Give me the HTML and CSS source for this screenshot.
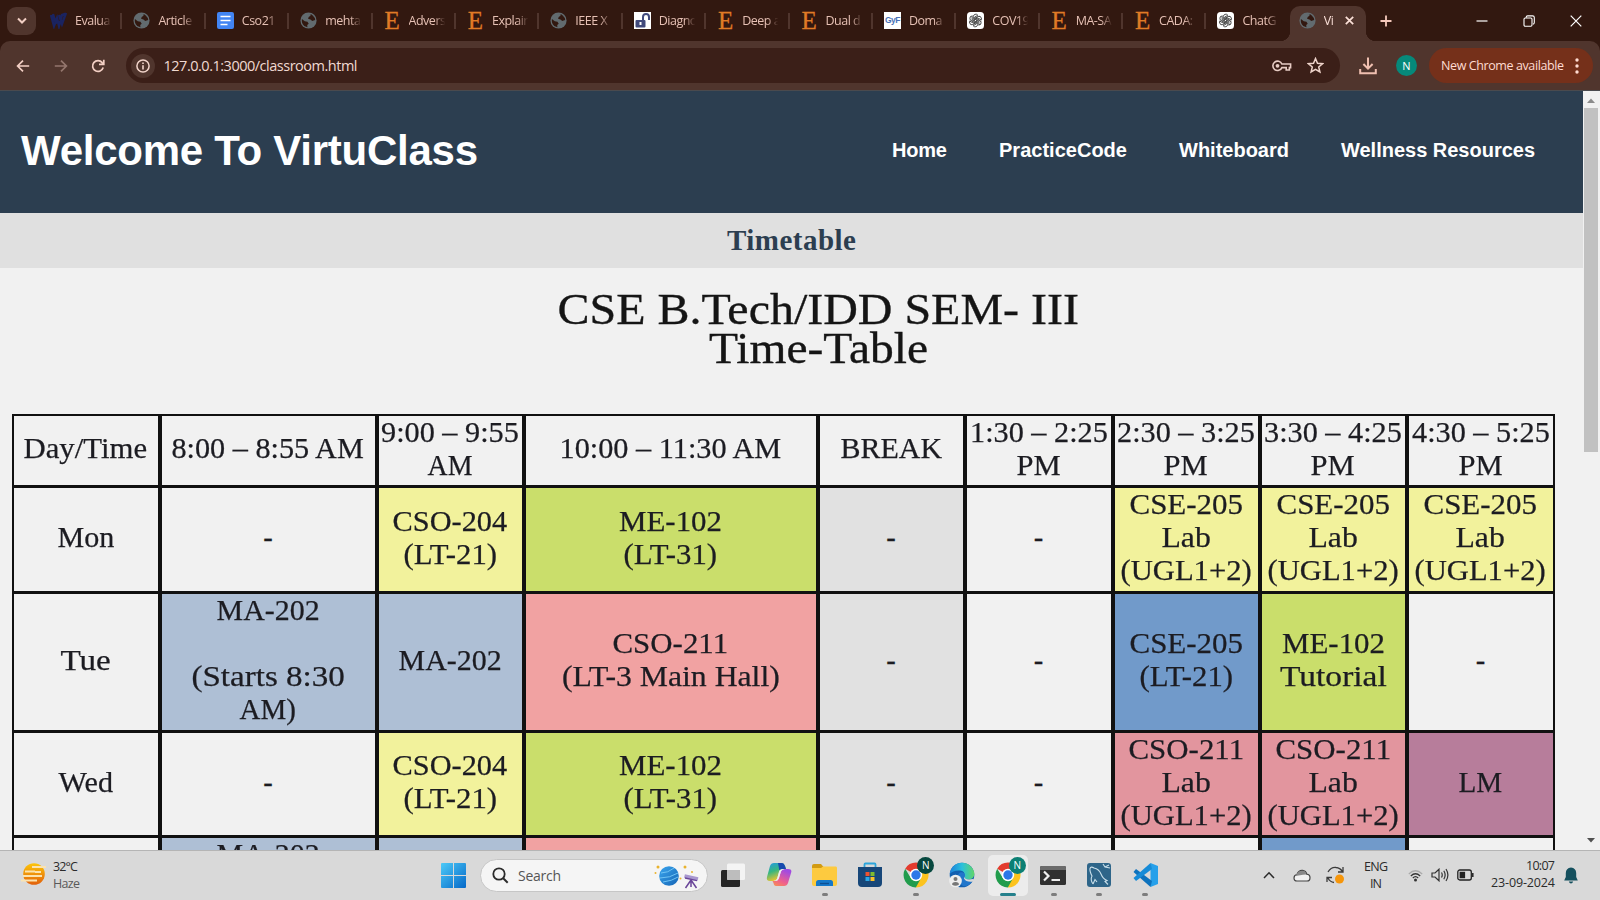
FILE: index.html
```html
<!DOCTYPE html>
<html lang="en">
<head>
<meta charset="utf-8">
<title>VirtuClass</title>
<link rel="stylesheet" href="styles.css">
</head>
<body>
<svg class="defs" width="0" height="0">
  <symbol id="globe" viewBox="0 0 16 16"><circle cx="8" cy="8" r="7.6" fill="#626b6f"/><path d="M1.800 6.500 4.500 8.800 7 9.200 8.200 11 6.800 12.200 7 14.300 4 13.200Q1.200 10.500 1.800 6.500ZM7.500 1.800 10 2 9.800 3.600 8.200 4.600 7.600 6.400 9.800 7 11.500 8.400 14.300 7.600Q14.200 5 12 3.200L10.500 2Z" fill="#321810"/></symbol>
  <symbol id="gpt" viewBox="0 0 17 17"><rect width="17" height="17" rx="3.500" fill="#fff"/><g fill="none" stroke="#3c3c3c" stroke-width=".9"><path id="petal" d="M6.300 7.800V4.600A2.500 2.500 0 0 1 10.800 3.200L7.400 5.300V8.900"/><use href="#petal" transform="rotate(60 8.500 8.500)"/><use href="#petal" transform="rotate(120 8.500 8.500)"/><use href="#petal" transform="rotate(180 8.500 8.500)"/><use href="#petal" transform="rotate(240 8.500 8.500)"/><use href="#petal" transform="rotate(300 8.500 8.500)"/></g></symbol>
  <symbol id="chrome" viewBox="0 0 26 26"><path d="M13 13 2.2 6.8A12.4 12.4 0 0 1 23.8 6.8Z" fill="#e33b2e"/><path d="M13 13 23.8 6.8A12.4 12.4 0 0 1 13 25.4Z" fill="#fcc31e"/><path d="M13 7H23.9L18.2 16Z" fill="#fcc31e"/><path d="M18.2 16 13 25.4 10 17Z" fill="#fcc31e"/><path d="M2.2 6.8 7.8 16 13 19 18 16.2 12.8 25.4A12.4 12.4 0 0 1 2.2 6.8Z" fill="#219c4c"/><circle cx="13" cy="13" r="6.2" fill="#fff"/><circle cx="13" cy="13" r="4.7" fill="#2c77e8"/></symbol>
</svg>

<div class="tabbar">
  <div class="tabsearch"><svg width="12" height="8" viewBox="0 0 12 8"><path d="M2 1.5 6 5.5 10 1.5" fill="none" stroke="#f2cfc4" stroke-width="2"/></svg></div>
  <div class="tab"><svg class="fav" viewBox="0 0 17 17"><path d="M1 3 4 14 7 6 9 14 12 3 15 2 M3 2 6 12 M9 3 12 12 16 1" fill="none" stroke="#1a2360" stroke-width="2.4"/></svg><span>Evalua</span></div>
  <div class="tab"><svg class="fav"><use href="#globe"/></svg><span>Article</span></div>
  <div class="tab"><svg class="fav" viewBox="0 0 17 17"><rect width="17" height="17" rx="2" fill="#4285f4"/><path d="M3.5 4.5h10M3.5 8.5h10M3.5 12.5h7" stroke="#fff" stroke-width="1.7"/></svg><span>Cso21</span></div>
  <div class="tab"><svg class="fav"><use href="#globe"/></svg><span>mehta</span></div>
  <div class="tab"><b class="fav els">E</b><span>Advers</span></div>
  <div class="tab"><b class="fav els">E</b><span>Explain</span></div>
  <div class="tab"><svg class="fav"><use href="#globe"/></svg><span>IEEE X</span></div>
  <div class="tab"><svg class="fav" viewBox="0 0 17 17"><rect width="17" height="17" fill="#fff"/><rect x="1.5" y="8" width="10" height="7.5" rx="1" fill="#414a7c"/><path d="M9 8V5a3 3 0 0 1 6 0V8" fill="none" stroke="#414a7c" stroke-width="2"/><path d="M6.5 10v3" stroke="#fff" stroke-width="2"/></svg><span>Diagno</span></div>
  <div class="tab"><b class="fav els">E</b><span>Deep a</span></div>
  <div class="tab"><b class="fav els">E</b><span>Dual d</span></div>
  <div class="tab"><b class="fav gvf">GyF</b><span>Doma</span></div>
  <div class="tab"><svg class="fav"><use href="#gpt"/></svg><span>COV19</span></div>
  <div class="tab"><b class="fav els">E</b><span>MA-SA</span></div>
  <div class="tab"><b class="fav els">E</b><span>CADA:</span></div>
  <div class="tab last"><svg class="fav"><use href="#gpt"/></svg><span>ChatG</span></div>
  <div class="tab active"><svg class="fav"><use href="#globe"/></svg><span>Vi</span><svg class="x" width="9" height="9" viewBox="0 0 9 9"><path d="M.8.8 8.2 8.2M8.2.8.8 8.2" stroke="#fbe0d8" stroke-width="1.7"/></svg></div>
  <svg class="plus" width="12" height="12" viewBox="0 0 12 12"><path d="M6 .5v11M.5 6h11" stroke="#f6c9bc" stroke-width="1.8"/></svg>
  <div class="winctl">
    <svg width="12" height="12" viewBox="0 0 12 12"><path d="M.5 6h11" stroke="#fff" stroke-width="1.2"/></svg>
    <svg width="12" height="12" viewBox="0 0 12 12"><g fill="none" stroke="#fff" stroke-width="1.1"><rect x="1" y="3" width="8" height="8.2" rx="1.2"/><path d="M3.2 2.8V2.2Q3.2.9 4.6.9H9.6Q11.3.9 11.3 2.6V7.6Q11.3 9 10 9.2"/></g></svg>
    <svg width="12" height="12" viewBox="0 0 12 12"><path d="M.7.7 11.3 11.3M11.3.7.7 11.3" stroke="#fff" stroke-width="1.2"/></svg>
  </div>
</div>

<div class="toolbar">
  <svg class="nav" width="14" height="14" viewBox="0 0 14 14"><path d="M13.2 7H1.8M7 1.6 1.6 7 7 12.4" fill="none" stroke="#f3cfc4" stroke-width="1.7"/></svg>
  <svg class="nav" width="14" height="14" viewBox="0 0 14 14"><path d="M.8 7H12.2M7 1.6 12.4 7 7 12.4" fill="none" stroke="#94766d" stroke-width="1.7"/></svg>
  <svg class="nav" width="14" height="14" viewBox="0 0 14 14"><path d="M12.2 8.5A5.4 5.4 0 1 1 11.2 3.6L12.6 5M12.8.8V5.4H8" fill="none" stroke="#f3cfc4" stroke-width="1.7"/></svg>
  <div class="omnibox">
    <div class="info"><svg width="14" height="14" viewBox="0 0 14 14"><circle cx="7" cy="7" r="6.1" fill="none" stroke="#f3d5cb" stroke-width="1.5"/><path d="M7 6.2V10.4M7 3.4V5" stroke="#f3d5cb" stroke-width="1.6"/></svg></div>
    <span class="url" data-w="194">127.0.0.1:3000/classroom.html</span>
    <svg class="key" width="20" height="12" viewBox="0 0 20 12"><g fill="none" stroke="#e8cdc5" stroke-width="1.6"><path d="M9.9 4H18.6V7.6H17.4V10H14.2V7.6H9.9A4.7 4.7 0 1 1 9.9 4Z"/></g><circle cx="5.5" cy="5.8" r="1.9" fill="#e8cdc5"/></svg>
    <svg width="17" height="17" viewBox="0 0 17 17"><path d="M8.5 1.6 10.5 6.3 15.6 6.7 11.7 10 12.9 15 8.5 12.3 4.1 15 5.3 10 1.4 6.7 6.5 6.3Z" fill="none" stroke="#efd4cb" stroke-width="1.5"/></svg>
  </div>
  <svg class="dl" width="18" height="18" viewBox="0 0 18 18"><path d="M9 .5V11.5M4.4 7 9 11.6 13.6 7M1.2 12v4.3H16.8V12" fill="none" stroke="#efbfb0" stroke-width="2"/></svg>
  <div class="avatar">N</div>
  <div class="update"><span data-w="123">New Chrome available</span><svg width="4" height="16" viewBox="0 0 4 16"><g fill="#ffdcd2"><circle cx="2" cy="2" r="1.7"/><circle cx="2" cy="8" r="1.7"/><circle cx="2" cy="14" r="1.7"/></g></svg></div>
</div>

<div class="viewport">
  <div class="page">
    <header class="site">
      <h1 data-w="457">Welcome To VirtuClass</h1>
      <nav><a data-w="55">Home</a><a data-w="128">PracticeCode</a><a data-w="110">Whiteboard</a><a data-w="194">Wellness Resources</a></nav>
    </header>
    <h2 class="band"><span data-w="129">Timetable</span></h2>
    <div class="heading"><div><span data-s="521">CSE B.Tech/IDD SEM- III</span></div><div><span data-s="219">Time-Table</span></div></div>
    <div class="grid">
      <div><span data-s="124">Day/Time</span></div>
      <div><span data-s="192">8:00 – 8:55 AM</span></div>
      <div><span data-s="138">9:00 – 9:55</span><span data-s="45">AM</span></div>
      <div><span data-s="222">10:00 – 11:30 AM</span></div>
      <div><span data-s="102">BREAK</span></div>
      <div><span data-s="138">1:30 – 2:25</span><span data-s="44">PM</span></div>
      <div><span data-s="138">2:30 – 3:25</span><span data-s="44">PM</span></div>
      <div><span data-s="138">3:30 – 4:25</span><span data-s="44">PM</span></div>
      <div><span data-s="138">4:30 – 5:25</span><span data-s="44">PM</span></div>

      <div><span data-s="57">Mon</span></div>
      <div><span>-</span></div>
      <div class="yellow"><span data-s="115">CSO-204</span><span data-s="94">(LT-21)</span></div>
      <div class="green"><span data-s="103">ME-102</span><span data-s="94">(LT-31)</span></div>
      <div class="grey"><span>-</span></div>
      <div><span>-</span></div>
      <div class="yellow"><span data-s="114">CSE-205</span><span data-s="49">Lab</span><span data-s="131">(UGL1+2)</span></div>
      <div class="yellow"><span data-s="114">CSE-205</span><span data-s="49">Lab</span><span data-s="131">(UGL1+2)</span></div>
      <div class="yellow"><span data-s="114">CSE-205</span><span data-s="49">Lab</span><span data-s="131">(UGL1+2)</span></div>

      <div><span data-s="50">Tue</span></div>
      <div class="steel"><span data-s="103">MA-202</span><span>&nbsp;</span><span data-s="153">(Starts 8:30</span><span data-s="56">AM)</span></div>
      <div class="steel"><span data-s="103">MA-202</span></div>
      <div class="coral"><span data-s="116">CSO-211</span><span data-s="218">(LT-3 Main Hall)</span></div>
      <div class="grey"><span>-</span></div>
      <div><span>-</span></div>
      <div class="blue"><span data-s="114">CSE-205</span><span data-s="94">(LT-21)</span></div>
      <div class="green"><span data-s="103">ME-102</span><span data-s="107">Tutorial</span></div>
      <div><span>-</span></div>

      <div><span data-s="55">Wed</span></div>
      <div><span>-</span></div>
      <div class="yellow"><span data-s="115">CSO-204</span><span data-s="94">(LT-21)</span></div>
      <div class="green"><span data-s="103">ME-102</span><span data-s="94">(LT-31)</span></div>
      <div class="grey"><span>-</span></div>
      <div><span>-</span></div>
      <div class="rose"><span data-s="116">CSO-211</span><span data-s="49">Lab</span><span data-s="131">(UGL1+2)</span></div>
      <div class="rose"><span data-s="116">CSO-211</span><span data-s="49">Lab</span><span data-s="131">(UGL1+2)</span></div>
      <div class="plum"><span data-s="44">LM</span></div>

      <div></div>
      <div class="steel top"><span data-s="103">MA-202</span></div>
      <div class="steel"></div>
      <div class="coral"></div>
      <div class="grey"></div>
      <div></div>
      <div></div>
      <div class="blue"></div>
      <div></div>
    </div>
  </div>
  <div class="scroll">
    <svg width="8" height="5" viewBox="0 0 8 5"><path d="M0 5 4 .5 8 5Z" fill="#8b8b8b"/></svg>
    <div class="thumb"></div>
    <svg class="down" width="8" height="5" viewBox="0 0 8 5"><path d="M0 0 4 4.5 8 0Z" fill="#505050"/></svg>
  </div>
</div>

<div class="taskbar">
  <svg class="haze" width="26" height="24" viewBox="0 0 26 24"><defs><linearGradient id="sun" x2="0" y2="1"><stop stop-color="#fdc60a"/><stop offset="1" stop-color="#e2600b"/></linearGradient></defs><circle cx="13" cy="12" r="10.8" fill="url(#sun)"/><path d="M11 5H25M4 9.500H14M14 10H20M2 14H13M12 14H21M0 18.500H16" stroke="#fbe3b0" stroke-width="1.8"/></svg>
  <div class="weather"><span data-w="25">32°C</span><span class="dim" data-w="27">Haze</span></div>
  <svg class="win" width="25" height="25" viewBox="0 0 25 25"><defs><linearGradient id="wl" x2="1" y2="1"><stop stop-color="#4ccaf8"/><stop offset="1" stop-color="#0568c8"/></linearGradient></defs><path d="M1 0H12V12H0V1Q0 0 1 0ZM13 0H24Q25 0 25 1V12H13ZM0 13H12V25H1Q0 25 0 24ZM13 13H25V24Q25 25 24 25H13Z" fill="url(#wl)"/></svg>
  <div class="search">
    <svg width="17" height="17" viewBox="0 0 17 17"><circle cx="7" cy="7" r="5.7" fill="none" stroke="#2b2b2b" stroke-width="1.8"/><path d="M11.200 11.200 15.700 15.700" stroke="#2b2b2b" stroke-width="2"/></svg>
    <span data-w="43">Search</span>
    <svg class="space" width="46" height="26" viewBox="0 0 46 26"><defs><linearGradient id="planet" x2="1" y2="1"><stop stop-color="#3aa5ee"/><stop offset="1" stop-color="#1565b5"/></linearGradient></defs><circle cx="16" cy="13" r="9.800" fill="url(#planet)"/><path d="M8 10Q15 10 21 5M7 15Q17 15 25 10M10 19Q19 18 25 14" fill="none" stroke="#6fc3f4" stroke-width="1"/><g fill="#e9b32e"><circle cx="5" cy="4" r="1.500"/><circle cx="32" cy="4" r="1.500"/><circle cx="2.500" cy="10" r="1"/><circle cx="39" cy="9" r="1"/><circle cx="27.500" cy="15.500" r="1"/></g><path d="M31.500 13 45 16" stroke="#a897cf" stroke-width="3.600"/><path d="M32 15 44 17.600" stroke="#6a4699" stroke-width="1.300"/><path d="M38 17 32.500 25M38 17V24M38 17 43.500 25" stroke="#6a4699" stroke-width="1.500"/></svg>
  </div>
  <div class="apps">
    <div class="app"><svg viewBox="0 0 26 26"><rect x="1" y="8" width="19" height="17" rx="1.500" fill="#252525"/><rect x="7" y="1.500" width="18" height="16.500" rx="1.500" fill="#f4f4f4"/><path d="M7 8H20V18H8.500Q7 18 7 16.500Z" fill="#bdbdbd"/></svg></div>
    <div class="app"><svg viewBox="0 0 26 26"><defs><linearGradient id="ca" x2=".4" y2="1"><stop stop-color="#2399e8"/><stop offset=".5" stop-color="#36b680"/><stop offset="1" stop-color="#f3c52b"/></linearGradient><linearGradient id="cb" x1=".5" x2="0" y2="1"><stop stop-color="#a24be0"/><stop offset=".6" stop-color="#f0608c"/><stop offset="1" stop-color="#f7954b"/></linearGradient></defs><path d="M8 1H16Q18 1 19 4L20 7H17Q14 7 13 10L11 17Q10 19 7 19H4Q0 19 1 15L4 4Q5 1 8 1Z" fill="url(#ca)"/><path d="M18 24H10Q8 24 7.500 21L6.500 19H9Q12 19 13 16L15 9Q16 7 19 7H22Q26.500 7 25 11L22 21Q21 24 18 24Z" fill="url(#cb)"/><path d="M12 1H16Q18 1 19 4L20 7H17Q14 7 13.400 8.500Z" fill="#1649ae"/><path d="M13.400 8.500Q14.500 7 17 7H18.500Q15.800 7.500 15 9.500L12.800 16.500Q12 19 9 19H7.500Q10.500 18.700 11.200 16.500Z" fill="#eee"/></svg></div>
    <div class="app run"><svg viewBox="0 0 26 26"><path d="M1 4Q1 2 3 2H10L12.500 5V9H1Z" fill="#d29b13"/><path d="M1 6H10L12 4.500H25Q26 4.500 26 6V22Q26 24 24 24H3Q1 24 1 22Z" fill="#fdca3f"/><path d="M5 24V20.500Q5 18 7.500 18H19.500Q22 18 22 20.500V24Z" fill="#1478ca"/><path d="M9 21.500H18" stroke="#0c4f93" stroke-width="1.400"/></svg></div>
    <div class="app"><svg viewBox="0 0 26 26"><path d="M7.500 6V2.500Q7.500 1.500 8.500 1.500H17.500Q18.500 1.500 18.500 2.500V6" fill="none" stroke="#2ba5dc" stroke-width="1.800"/><path d="M1 5H25V21Q25 25 21 25H5Q1 25 1 21Z" fill="#174779"/><path d="M8.500 10h4v4h-4Z" fill="#ee5330"/><path d="M13.500 10h4v4h-4Z" fill="#7fbb2f"/><path d="M8.500 15h4v4h-4Z" fill="#2ba8e8"/><path d="M13.500 15h4v4h-4Z" fill="#fcc127"/></svg></div>
    <div class="app run"><svg><use href="#chrome"/></svg><i class="badge dark">N</i></div>
    <div class="app"><svg viewBox="0 0 26 26"><defs><linearGradient id="eg" x2="1"><stop stop-color="#1b7fdb"/><stop offset=".5" stop-color="#2bc0dc"/><stop offset="1" stop-color="#62d667"/></linearGradient></defs><circle cx="13" cy="13" r="12.300" fill="#125fb0"/><path d="M.7 12A12.400 12.400 0 0 1 25.400 12Q25 17 19.500 17.500 15 17.500 15.500 14.500 16.500 9 11 8.500 4 8 .7 12Z" fill="url(#eg)"/><path d="M9 15Q9 9.500 14 10.500 16.800 12 15.500 15 16 19 24 18 20 25 14 24 9 21 9 15Z" fill="#2176cb"/><path d="M15.500 14.500Q15.500 18.500 24 17L26 18 24.500 19.500Q17 20.500 15 16.500Z" fill="#d9d9d9"/><circle cx="6.500" cy="19" r="6.300" fill="#eee"/><circle cx="6.500" cy="17" r="2" fill="#777"/><path d="M3 22.500Q3 20 6.500 20T10 22.500Q6.500 25 3 22.500Z" fill="#777"/></svg></div>
    <div class="app on"><svg><use href="#chrome"/></svg><i class="badge">N</i></div>
    <div class="app run"><svg viewBox="0 0 26 26"><rect x="0" y="4" width="26" height="19" rx="1.500" fill="#303030"/><path d="M0 8V5.500Q0 4 1.500 4H24.500Q26 4 26 5.500V8Z" fill="#6b6b6b"/><path d="M4 9.500 8.500 14 4 18.500M11.500 18H20" fill="none" stroke="#eee" stroke-width="2.200"/></svg></div>
    <div class="app run"><svg viewBox="0 0 26 26"><rect x="1" y="1" width="24" height="24" rx="3" fill="#2e6589"/><path d="M7 22Q4 18 6 14 3.500 9 4 6.500 5 4 8 6 13 7 15 12 17 17 21 18.500L19 19.500 22 22.500M7 22 9 17.500 11 20M17 2 19 5 24 6M19 5 23 3" fill="none" stroke="#c9dfea" stroke-width="1.100"/></svg></div>
    <div class="app run"><svg viewBox="0 0 26 26"><path d="M18.500 1 26 4V22L18.500 25Z" fill="#26a0ea"/><path d="M18.500 25 1.500 10 4 7 20 19Z" fill="#0d72bd"/><path d="M18.500 1 1.500 16 4 19 20 7Z" fill="#168bd7"/></svg></div>
  </div>
  <div class="tray">
    <svg width="12" height="8" viewBox="0 0 12 8"><path d="M1 7 6 1.800 11 7" fill="none" stroke="#2b2b2b" stroke-width="1.500"/></svg>
    <svg class="cloud" width="18" height="13" viewBox="0 0 18 13"><path d="M4 12Q1 12 1 9T4 5.500Q5.500 1 9.500 1.300 13 1.600 13.700 5.200 17 5.500 17 8.700 17 12 14 12Z" fill="#f1f1f1" stroke="#444" stroke-width="1.200"/><path d="M2.500 7Q5 1.500 9.500 1.700 13 2 13.400 5.600L10 5.800Z" fill="#888"/></svg>
    <svg class="sync" width="20" height="18" viewBox="0 0 20 18"><path d="M2 6Q5 1 10 1.500 14 1.800 16.500 5.500M17 1V6H12M1 16V11.500H6M2 12Q4 16 8 16.500" fill="none" stroke="#3b3b3b" stroke-width="1.300"/><circle cx="13.500" cy="13" r="4.500" fill="#f6960b"/></svg>
    <div class="lang"><span data-w="24">ENG</span><span data-w="12">IN</span></div>
    <svg class="wifi" width="15" height="13" viewBox="0 0 15 13"><g fill="none" stroke="#333" stroke-width="1.200"><path d="M.8 5Q7.500-1.500 14.200 5" stroke="#aaa"/><path d="M2.800 7Q7.500 2.500 12.200 7M4.800 9Q7.500 6.400 10.200 9"/></g><circle cx="7.500" cy="11" r="1.500" fill="#333"/></svg>
    <svg class="vol" width="18" height="14" viewBox="0 0 18 14"><path d="M1 5H4L8 1.200V12.800L4 9H1ZM10.500 4.500Q12 7 10.500 9.500M12.800 2.700Q15.500 7 12.800 11.300M15 1Q18.800 7 15 13" fill="none" stroke="#333" stroke-width="1.200"/></svg>
    <svg class="bat" width="17" height="12" viewBox="0 0 17 12"><rect x=".8" y="1" width="13.500" height="10" rx="2" fill="none" stroke="#222" stroke-width="1.300"/><rect x="2.600" y="2.800" width="5.500" height="6.400" fill="#222"/><path d="M15.800 4V8" stroke="#222" stroke-width="1.500"/></svg>
    <div class="clock"><span data-w="29">10:07</span><span data-w="64">23-09-2024</span></div>
    <svg class="bell" width="14" height="17" viewBox="0 0 14 17"><path d="M7 .5Q12 1 12.200 6V10L13.800 13.500H.2L1.800 10V6Q2 1 7 .5ZM4.800 14.500H9.200Q8.500 16.500 7 16.500T4.800 14.500Z" fill="#15505e"/></svg>
  </div>
</div>
<script src="fit.js"></script>
</body>
</html>
```
FILE: styles.css
```css
* { box-sizing: border-box; }
body { margin: 0; width: 1600px; height: 900px; overflow: hidden; display: flex; flex-direction: column; background: #321810; font-family: "Open Sans", "Noto Sans", sans-serif; }
.defs { position: absolute; }
svg { display: block; flex: none; }
[data-w] { white-space: nowrap; }
[data-s] { display: inline-block; white-space: nowrap; }

.tabbar { height: 41px; flex: none; display: flex; align-items: center; background: #321810; padding-left: 7px; color: #e6c0b4; font-size: 12.5px; }
.tabsearch { width: 29px; height: 28px; flex: none; border-radius: 9px; background: #50352d; display: flex; align-items: center; justify-content: center; margin-right: 3px; }
.tab { width: 83.4px; height: 16px; flex: none; display: flex; align-items: center; padding-left: 11px; border-right: 2px solid #50352d; }
.tab.last { border-color: transparent; }
.tab span { width: 37px; margin-left: 8px; overflow: hidden; white-space: nowrap; line-height: 20px; letter-spacing: -.5px; -webkit-mask-image: linear-gradient(90deg, #000 68%, transparent 98%); mask-image: linear-gradient(90deg, #000 68%, transparent 98%); }
.fav { width: 17px; height: 17px; flex: none; }
.els { font: 25px/17px "Liberation Serif", serif; color: #e07b26; text-align: center; -webkit-text-stroke: .3px #e07b26; }
.gvf { background: #fff; color: #4a72b8; font: bold 8.5px/17px "Liberation Sans", sans-serif; text-align: center; letter-spacing: -.5px; }
.tab.active { position: relative; width: 76px; height: 35px; align-self: flex-end; border: 0; border-radius: 10px 10px 0 0; background: #50352d; padding: 0 0 6px 9px; color: #fbe0d8; }
.tab.active::before, .tab.active::after { content: ""; position: absolute; bottom: 0; width: 10px; height: 10px; }
.tab.active::before { left: -10px; background: radial-gradient(circle at 0 0, transparent 10px, #50352d 10.5px); }
.tab.active::after { right: -10px; background: radial-gradient(circle at 100% 0, transparent 10px, #50352d 10.5px); }
.tab.active span { width: 12px; }
.x { margin-left: 9px; }
.plus { margin-left: 14px; }
.winctl { margin-left: auto; padding-right: 18px; display: flex; gap: 35px; }

.toolbar { height: 50px; flex: none; display: flex; align-items: center; background: #50352d; border-radius: 10px 10px 0 0; padding-left: 16px; border-bottom: 1px solid #4a4a4e; }
.nav { margin-right: 23.5px; }
.omnibox { width: 1214.5px; height: 35px; flex: none; margin-left: -3px; border-radius: 18px; background: #3b1f18; display: flex; align-items: center; padding: 0 16px 0 5px; }
.info { width: 24px; height: 24px; border-radius: 50%; background: #50352d; display: flex; align-items: center; justify-content: center; margin-right: 9px; }
.url { font-size: 14.5px; color: #f0d9d1; }
.key { margin-left: auto; margin-right: 15px; }
.dl { margin-left: 19px; }
.avatar { width: 21px; height: 21px; flex: none; margin: 0 12px 0 19px; border-radius: 50%; background: #06897a; color: #fff; font-size: 11px; line-height: 21px; text-align: center; }
.update { width: 164px; height: 35px; flex: none; border-radius: 18px; background: #75301a; display: flex; align-items: center; justify-content: space-between; padding: 0 14px 0 12px; color: #ffdcd2; font-size: 12.5px; }

.viewport { flex: 1; min-height: 0; display: flex; }
.page { width: 1583px; overflow: hidden; background: #f1f1f1; }
.site { height: 121.5px; background: #2c3e50; color: #fff; display: flex; align-items: center; justify-content: space-between; padding: 0 48px 2px 21px; font-family: "Liberation Sans", Arial, sans-serif; }
.site h1 { margin: 0; font-size: 42px; }
.site nav { display: flex; gap: 52px; font-size: 20px; font-weight: bold; }
.band { margin: 0; height: 55.5px; background: #e0e0e0; color: #2c3e50; text-align: center; font: bold 29px/55px "Liberation Serif", serif; }
.heading { padding: 22px 0 0 54px; height: 146px; text-align: center; font: 44px/39px "Liberation Serif", serif; color: #151515; -webkit-text-stroke: .35px #151515; }
.grid { width: 1543px; margin-left: 12px; border: 2px solid #111; background: #111; display: grid; gap: 3px 4px; grid-template-columns: 144px 213px 143px 290px 143px 144px 143px 143px 144px; grid-template-rows: 69px 103px 136px 102px 136px; font: 28.5px/33px "Liberation Serif", serif; color: #1c1c22; -webkit-text-stroke: .25px #1c1c22; }
.grid > div { background: #f1f1f1; display: flex; flex-direction: column; align-items: center; justify-content: center; padding: 0 1px 4px 0; }
.grid > .top { justify-content: flex-start; }
.grid > .yellow { background: #f2f29c; }
.grid > .green { background: #cade6b; }
.grid > .grey { background: #e1e1e1; }
.grid > .steel { background: #aebfd5; }
.grid > .coral { background: #f1a2a2; }
.grid > .blue { background: #719aca; }
.grid > .rose { background: #e2959e; }
.grid > .plum { background: #b77d9b; }
.scroll { width: 17px; background: #f1f1f1; display: flex; flex-direction: column; align-items: center; padding: 7px 1px 7px 0; }
.thumb { width: 14px; height: 344px; margin-top: 5px; background: #c1c1c1; }
.down { margin-top: auto; }

.taskbar { height: 50px; flex: none; display: flex; align-items: center; background: #d9d9d9; border-top: 1px solid #b5b5b5; color: #2b2b2b; font-size: 12.5px; line-height: 17px; }
.haze { margin-left: 21px; margin-bottom: 3px; }
.weather { width: 40px; margin: 0 0 2px 6px; display: flex; flex-direction: column; align-items: flex-start; }
.dim { color: #5a5a5a; }
.win { margin: 0 14px 0 348px; }
.search { width: 228px; height: 33px; border-radius: 17px; background: #f5f5f5; border: 1px solid #c6c6c6; display: flex; align-items: center; padding: 0 8px 0 11px; font-size: 14px; color: #555; }
.search span { margin-left: 9px; }
.space { margin-left: auto; }
.apps { display: flex; margin-left: 2px; }
.app { position: relative; width: 45.8px; height: 49px; display: flex; align-items: center; justify-content: center; padding-bottom: 1px; }
.app svg { position: relative; width: 26px; height: 26px; }
.app.run::after, .app.on::after { content: ""; position: absolute; bottom: 4px; left: 20px; width: 6px; height: 3px; border-radius: 2px; background: #7d7d7d; }
.app.on::after { left: 15px; width: 16px; background: #25808c; }
.app.on::before { content: ""; position: absolute; left: 3px; top: 4px; width: 40px; height: 41px; border-radius: 5px; background: #ececec; }
.badge { position: absolute; left: 24px; top: 6px; width: 17px; height: 17px; border-radius: 50%; background: #0c8074; color: #fff; font-style: normal; font-size: 10px; line-height: 17px; text-align: center; }
.badge.dark { background: #07483f; }
.tray { flex: 1; display: flex; align-items: center; padding: 0 22px 1px 0; justify-content: flex-end; }
.cloud { margin-left: 18px; }
.sync { margin-left: 15px; }
.lang { width: 24px; margin-left: 18px; display: flex; flex-direction: column; align-items: center; }
.wifi { margin-left: 20px; }
.vol { margin-left: 8px; }
.bat { margin-left: 8px; }
.clock { width: 64px; margin: 0 0 2px 17px; display: flex; flex-direction: column; align-items: flex-end; }
.bell { margin-left: 9px; }
```
FILE: fit.js
```js
// Labels with data-w are tracked to their declared width;
// timetable labels with data-s are stretched to it.
document.querySelectorAll('[data-w]').forEach(function (el) {
  var range = document.createRange();
  range.selectNodeContents(el);
  var natural = range.getBoundingClientRect().width;
  var step = (parseFloat(el.dataset.w) - natural) / (el.textContent.length - 1);
  el.style.letterSpacing = step + 'px';
  el.style.marginRight = -step + 'px';
});
document.querySelectorAll('[data-s]').forEach(function (el) {
  el.style.transform = 'scaleX(' + parseFloat(el.dataset.s) / el.offsetWidth + ')';
});
```
